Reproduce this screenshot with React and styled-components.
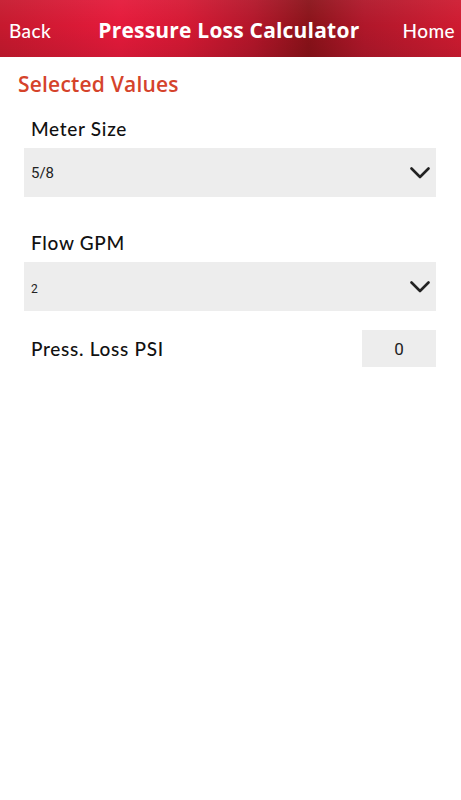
import React from 'react';
import styled, { createGlobalStyle } from 'styled-components';

const GlobalStyle = createGlobalStyle`
  body {
    margin: 0;
    background: #ffffff;
    font-family: 'Open Sans', Lato, sans-serif;
  }
`;

const Page = styled.div`
  width: 461px;
  min-height: 800px;
  background: #fff;
`;

const Header = styled.header`
  height: 57px;
  display: flex;
  align-items: center;
  justify-content: space-between;
  padding: 0 6px 0 9px;
  box-sizing: border-box;
  background:
    linear-gradient(180deg, rgba(255,255,255,0.05) 0%, rgba(0,0,0,0) 45%, rgba(0,0,0,0.08) 100%),
    linear-gradient(90deg, #c6192e 0%, #e51a3b 26%, #d51934 40%, #b3162a 55%, #8a1219 67%, #b0172a 79%, #cf1b31 100%);
  color: #fff;
`;

const NavText = styled.span`
  font-family: Lato, sans-serif;
  font-size: 19px;
  font-weight: 500;
  letter-spacing: 0.4px;
  padding-top: 3px;
`;

const Title = styled.h1`
  margin: 0 0 0 4px;
  font-size: 21px;
  font-weight: 700;
  letter-spacing: 0.2px;
  padding-top: 2px;
`;

const Content = styled.main`
  padding: 14px 24px 0 24px;
`;

const SectionTitle = styled.h2`
  margin: 0 0 0 -6px;
  font-size: 21px;
  line-height: 26px;
  font-weight: 600;
  letter-spacing: 0.2px;
  color: #d5432b;
`;

const Field = styled.div`
  margin-top: ${({ gap }) => gap}px;
`;

const Label = styled.div`
  font-family: Lato, sans-serif;
  font-size: 19px;
  line-height: 23px;
  font-weight: 500;
  letter-spacing: 0.7px;
  color: #111;
  padding-left: 7px;
  margin-bottom: ${({ flush }) => (flush ? 0 : 8)}px;
`;

const Select = styled.div`
  height: 49px;
  width: 412px;
  background: #ededed;
  display: flex;
  align-items: center;
  justify-content: space-between;
  padding: 0 6px 0 7px;
  box-sizing: border-box;
`;

const SelectValue = styled.span`
  font-family: Roboto, sans-serif;
  font-size: ${({ small }) => (small ? '12px' : '15px')};
  color: #222;
  padding-top: ${({ small }) => (small ? '4px' : '1px')};
`;

const Row = styled.div`
  margin-top: 19px;
  display: flex;
  align-items: center;
  justify-content: space-between;
  width: 412px;
`;

const ResultBox = styled.div`
  width: 74px;
  height: 37px;
  background: #ededed;
  display: flex;
  align-items: center;
  justify-content: center;
  font-family: Roboto, sans-serif;
  font-size: 17px;
  color: #222;
`;

const Chevron = () => (
  <svg width="20" height="12" viewBox="0 0 20 12">
    <path d="M1.5 1.5 L10 10 L18.5 1.5" fill="none" stroke="#222" strokeWidth="2.6" strokeLinecap="round" strokeLinejoin="round" />
  </svg>
);

export default function App() {
  return (
    <Page>
      <GlobalStyle />
      <Header>
        <NavText>Back</NavText>
        <Title>Pressure Loss Calculator</Title>
        <NavText>Home</NavText>
      </Header>
      <Content>
        <SectionTitle>Selected Values</SectionTitle>
        <Field gap={20}>
          <Label>Meter Size</Label>
          <Select>
            <SelectValue>5/8</SelectValue>
            <Chevron />
          </Select>
        </Field>
        <Field gap={34}>
          <Label>Flow GPM</Label>
          <Select>
            <SelectValue small>2</SelectValue>
            <Chevron />
          </Select>
        </Field>
        <Row>
          <Label as="span" flush>Press. Loss PSI</Label>
          <ResultBox>0</ResultBox>
        </Row>
      </Content>
    </Page>
  );
}
